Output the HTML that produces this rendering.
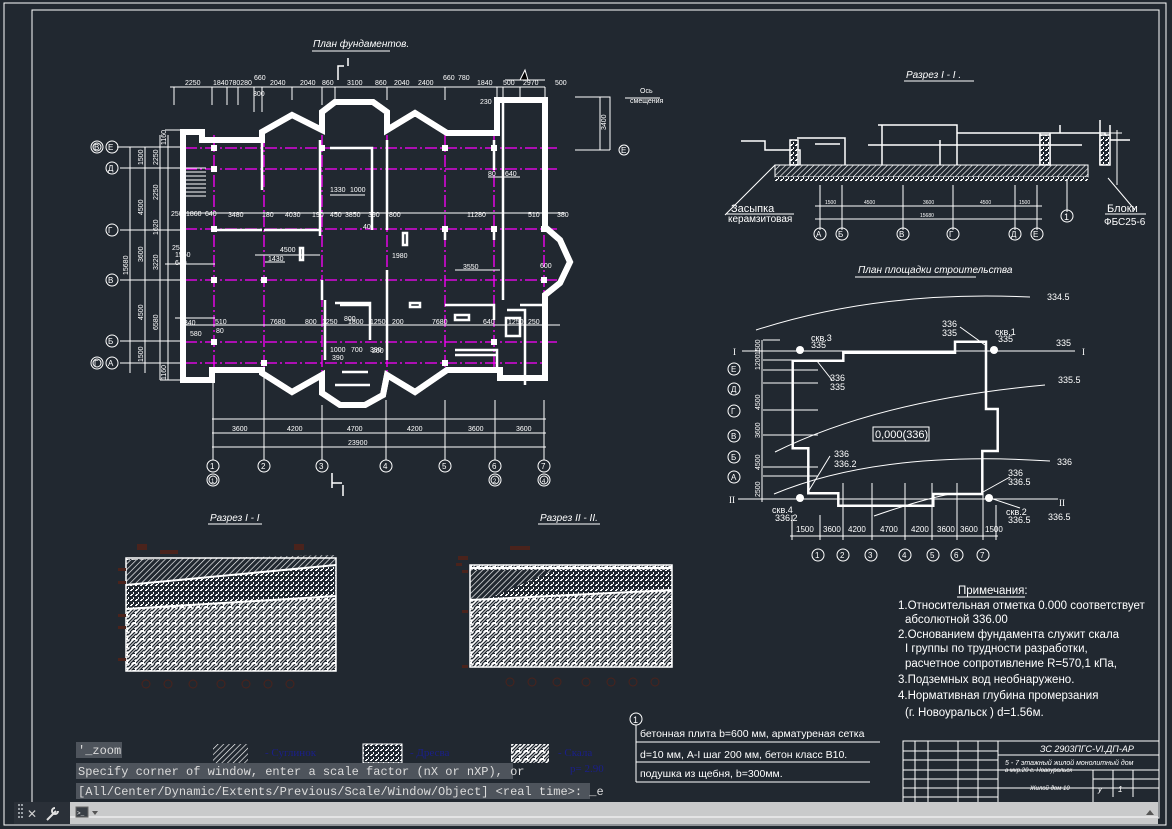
<!DOCTYPE html>
<html><head><meta charset="utf-8"><style>
html,body{margin:0;padding:0;background:#212830;overflow:hidden}
svg{display:block}
.t{font-family:"Liberation Sans",sans-serif;fill:#fff}
.m{font-family:"Liberation Mono",monospace;font-size:12px;fill:#dcdcdc}
</style></head><body>
<svg width="1172" height="829" viewBox="0 0 1172 829" xmlns="http://www.w3.org/2000/svg">
<defs>
<pattern id="hat" width="4" height="4" patternUnits="userSpaceOnUse" patternTransform="rotate(45)"><rect width="4" height="4" fill="#212830"/><line x1="0" y1="0" x2="0" y2="4" stroke="#fff" stroke-width="1.3"/></pattern>
<pattern id="dot" width="5" height="5" patternUnits="userSpaceOnUse"><rect width="5" height="5" fill="#212830"/><rect x="0" y="0" width="2" height="1" fill="#fff"/><rect x="3" y="2" width="1" height="2" fill="#fff"/><rect x="1" y="4" width="2" height="1" fill="#fff"/></pattern>
<pattern id="rock" width="8" height="8" patternUnits="userSpaceOnUse"><rect width="8" height="8" fill="#fff"/><path d="M0 7 L7 0 M2 8 L8 2 M0 3 L3 0" stroke="#212830" stroke-width="1.3"/><rect x="5" y="5" width="2" height="1" fill="#212830"/></pattern>
</defs>
<rect width="1172" height="829" fill="#212830"/>
<rect x="4" y="3" width="1162" height="822" fill="none" stroke="#fff" stroke-width="1"/>
<rect x="32" y="10" width="1127" height="808" fill="none" stroke="#fff" stroke-width="1"/>

<text x="313" y="47" class="t" font-size="10" font-style="italic">План фундаментов.</text>
<line x1="312" y1="51" x2="390" y2="51" stroke="#fff"/>
<path d="M338 80 V66 H344 M348 66 V58" stroke="#fff" fill="none" stroke-width="1.5"/>

<g stroke="#fff" stroke-width="1">
<line x1="170" y1="87" x2="545" y2="87"/>
<path d="M174 87V105 M212 87V105 M227 87V105 M238 87V105 M254 87V112 M262 87V112 M292 87V100 M322 87V105 M335 87V105 M387 87V100 M445 87V100 M497 87V105 M503 87V105 M520 87V100 M545 87V100"/>
<path d="M505 80 H545 M520 80 L525 70 L528 80"/>
</g>
<g class="t" font-size="7">
<text x="185" y="85">2250</text><text x="213" y="85">1840780280</text><text x="254" y="80">660</text><text x="270" y="85">2040</text><text x="300" y="85">2040</text><text x="322" y="85">860</text><text x="347" y="85">3100</text><text x="375" y="85">860</text><text x="394" y="85">2040</text><text x="418" y="85">2400</text><text x="443" y="80">660</text><text x="458" y="80">780</text><text x="477" y="85">1840</text><text x="503" y="85">500</text><text x="523" y="85">2970</text><text x="555" y="85">500</text><text x="253" y="96">300</text><text x="480" y="104">230</text>
<text x="640" y="93">Ось</text><text x="630" y="103">смещения</text>
</g>
<line x1="625" y1="98" x2="660" y2="98" stroke="#fff"/>
<path d="M575 97 H610 V150 M610 150 H575 M600 97 V150" stroke="#fff" fill="none"/>
<text x="0" y="0" class="t" font-size="7" transform="translate(606,130) rotate(-90)">3400</text>
<circle cx="624" cy="150" r="5" fill="none" stroke="#fff"/><text x="621" y="153" class="t" font-size="8">Е</text>

<g stroke="#ff00ff" stroke-width="1.3" stroke-dasharray="12 3 2 3" fill="none">
<path d="M185 148H560 M185 169H560 M185 229H560 M185 280H560 M185 342H560 M185 363H545"/>
<path d="M214 135V375 M264 135V375 M322 135V375 M387 135V375 M445 135V375 M494 135V375 M544 135V375"/>
</g>

<g fill="none" stroke-linejoin="miter">
<path id="ow" d="M183 132 H202 V140 H262 V132 L292 115 L322 130 V112 L335 102 H373 L387 112 V130 L415 113 L447 133 H497 V100 H545 V227 L560 240 L570 262 L560 283 L545 295 V378 H500 V370 H447 L415 392 L387 375 L383 395 L365 405 H340 L322 393 V375 L292 392 L262 373 V370 H212 V380 H183 Z" stroke="#fff" stroke-width="6"/>
<use href="#ow" stroke="#212830" stroke-width="2.5"/>
</g>
<g stroke="#fff" stroke-width="1"><path d="M186 168H206 M186 172H206 M186 176H206 M186 180H206 M186 184H206 M186 188H206 M186 192H206 M186 196H206"/></g>
<g stroke="#fff" stroke-width="2.5" fill="none">
<path d="M262 140V190 M264 230H320 M320 140V236 M330 148H372V230 M387 140V230 M387 270V360 M325 300V360 M335 303H370V340 M340 305H370 M445 305H494V320 M494 140V170 M445 230V240 M494 230V240 M503 100V300 M545 305H520 M507 310H525V385 M455 350H497V368 M455 355H497 M212 230H262 M322 280V300 M335 385H370 M342 372H368"/>
<rect x="403" y="233" width="4" height="12"/><rect x="300" y="248" width="3" height="12"/><rect x="410" y="303" width="10" height="4"/><rect x="455" y="315" width="14" height="5"/><rect x="506" y="318" width="14" height="18"/>
</g>
<g fill="#fff"><rect x="211" y="145" width="6" height="6"/><rect x="211" y="166" width="6" height="6"/><rect x="211" y="226" width="6" height="6"/><rect x="211" y="277" width="6" height="6"/><rect x="211" y="339" width="6" height="6"/><rect x="261" y="360" width="6" height="6"/><rect x="261" y="277" width="6" height="6"/><rect x="319" y="145" width="6" height="6"/><rect x="442" y="145" width="6" height="6"/><rect x="491" y="145" width="6" height="6"/><rect x="491" y="226" width="6" height="6"/><rect x="541" y="226" width="6" height="6"/><rect x="541" y="277" width="6" height="6"/><rect x="442" y="226" width="6" height="6"/><rect x="491" y="339" width="6" height="6"/><rect x="442" y="360" width="6" height="6"/></g>
<g stroke="#fff" stroke-width="1"><path d="M180 213H565 M180 325H560 M255 255H320 M265 262H285 M455 270H500 M330 195H365 M488 177H520 M165 264H215 M175 318H215"/></g>
<g class="t" font-size="7">
<text x="228" y="217">3480</text><text x="262" y="217">180</text><text x="285" y="217">4030</text><text x="312" y="217">190</text><text x="330" y="217">450</text><text x="345" y="217">3850</text><text x="368" y="217">390</text><text x="389" y="217">800</text><text x="467" y="217">11280</text><text x="528" y="217">510</text><text x="557" y="217">380</text>
<text x="280" y="252">4500</text><text x="268" y="261">1430</text><text x="463" y="269">3550</text><text x="488" y="176">80</text><text x="505" y="176">640</text><text x="330" y="192">1330</text><text x="350" y="192">1000</text><text x="363" y="229">40</text><text x="392" y="258">1980</text><text x="540" y="268">600</text>
<text x="215" y="324">510</text><text x="270" y="324">7680</text><text x="305" y="324">800</text><text x="322" y="324">1250</text><text x="348" y="324">1800</text><text x="370" y="324">1250</text><text x="392" y="324">200</text><text x="432" y="324">7680</text><text x="483" y="324">640</text><text x="508" y="324">1250</text><text x="528" y="324">250</text>
<text x="180" y="325">1340</text><text x="190" y="336">580</text><text x="216" y="333">80</text><text x="344" y="321">800</text><text x="372" y="353">200</text><text x="330" y="352">1000</text><text x="351" y="352">700</text><text x="370" y="352">390</text><text x="332" y="360">390</text>
<text x="171" y="216">250</text><text x="186" y="216">1860</text><text x="205" y="216">640</text><text x="175" y="257">1550</text><text x="175" y="265">640</text><text x="172" y="250">250</text>
</g>
<g stroke="#fff" stroke-width="1"><path d="M117 147H185 M120 168H185 M120 230H185 M120 280H185 M120 341H185 M120 363H185 M130 147V373 M145 147V373 M160 135V380 M168 135V380 M165 130H185 M160 380H185"/></g>
<g class="t" font-size="7">
<text transform="translate(128,275) rotate(-90)">15680</text><text transform="translate(143,165) rotate(-90)">1500</text><text transform="translate(143,215) rotate(-90)">4500</text><text transform="translate(143,262) rotate(-90)">3600</text><text transform="translate(143,320) rotate(-90)">4500</text><text transform="translate(143,362) rotate(-90)">1500</text><text transform="translate(158,165) rotate(-90)">2250</text><text transform="translate(158,200) rotate(-90)">2250</text><text transform="translate(158,235) rotate(-90)">1620</text><text transform="translate(158,270) rotate(-90)">3220</text><text transform="translate(158,330) rotate(-90)">6580</text><text transform="translate(166,145) rotate(-90)">1160</text><text transform="translate(166,380) rotate(-90)">1160</text>
</g>
<g fill="none" stroke="#fff" stroke-width="1">
<circle cx="112" cy="147" r="6"/><circle cx="97" cy="147" r="6"/><circle cx="97" cy="147" r="4"/>
<circle cx="112" cy="168" r="6"/><circle cx="112" cy="230" r="6"/><circle cx="112" cy="280" r="6"/><circle cx="112" cy="341" r="6"/><circle cx="112" cy="363" r="6"/><circle cx="97" cy="363" r="6"/><circle cx="97" cy="363" r="4"/>
</g>
<g class="t" font-size="8"><text x="108" y="150">Е</text><text x="94" y="150">В</text><text x="108" y="171">Д</text><text x="108" y="233">Г</text><text x="108" y="283">В</text><text x="108" y="344">Б</text><text x="108" y="366">А</text><text x="94" y="366">Г</text></g>
<g stroke="#fff" stroke-width="1"><path d="M212 419H546 M212 433H546 M212 447H546 M213 375V460 M264 375V460 M322 405V460 M386 400V460 M445 400V460 M495 400V460 M544 400V460"/></g>
<g class="t" font-size="7"><text x="232" y="431">3600</text><text x="287" y="431">4200</text><text x="347" y="431">4700</text><text x="407" y="431">4200</text><text x="468" y="431">3600</text><text x="516" y="431">3600</text><text x="348" y="445">23900</text></g>
<g fill="none" stroke="#fff" stroke-width="1">
<circle cx="213" cy="466" r="6"/><circle cx="264" cy="466" r="6"/><circle cx="322" cy="466" r="6"/><circle cx="386" cy="466" r="6"/><circle cx="445" cy="466" r="6"/><circle cx="495" cy="466" r="6"/><circle cx="544" cy="466" r="6"/>
<circle cx="213" cy="480" r="6"/><circle cx="213" cy="480" r="4"/><circle cx="495" cy="480" r="6"/><circle cx="495" cy="480" r="4"/><circle cx="544" cy="480" r="6"/><circle cx="544" cy="480" r="4"/>
</g>
<g class="t" font-size="8"><text x="210" y="469">1</text><text x="261" y="469">2</text><text x="319" y="469">3</text><text x="383" y="469">4</text><text x="442" y="469">5</text><text x="492" y="469">6</text><text x="541" y="469">7</text><text x="211" y="483" font-size="6">1</text><text x="493" y="483" font-size="6">2</text><text x="542" y="483" font-size="6">4</text></g>
<path d="M332 473V488 M332 483H342 M343 485V496" stroke="#fff" stroke-width="1.5" fill="none"/>

<text x="906" y="78" class="t" font-size="10" font-style="italic">Разрез I - I .</text>
<line x1="904" y1="81" x2="974" y2="81" stroke="#fff"/>
<rect x="775" y="165" width="313" height="12" fill="url(#hat)" stroke="#fff"/>
<rect x="775" y="177" width="313" height="4" fill="url(#dot)"/>
<g stroke="#fff" stroke-width="1.5" fill="none">
<path d="M741 141H765 V150 H800 V165 M797 138H845V165 M845 138V165 M878 125H957V165 M882 125V165 M957 133H1105V165 M1040 133V165 M1050 133V165 M1100 120V165 M940 140V165 M1060 125V133 M1110 125V140H1130"/>
<rect x="790" y="140" width="8" height="25" fill="url(#dot)"/><rect x="1040" y="135" width="10" height="30" fill="url(#dot)"/><rect x="1100" y="135" width="10" height="30" fill="url(#dot)"/>
<path d="M868 145H1082 M815 144H840"/>
</g>
<g stroke="#fff" stroke-width="1"><path d="M820 185V230 M842 185V230 M903 185V230 M953 185V230 M1015 185V230 M1037 185V230 M815 206H1042 M815 219H1042 M1067 180V212 M1108 178L1135 210 M725 215L775 165 M1117 130V185 M1105 133H1122"/></g>
<circle cx="1067" cy="216" r="6" fill="none" stroke="#fff"/><text x="1064" y="220" class="t" font-size="9">1</text>
<g fill="none" stroke="#fff"><circle cx="820" cy="234" r="6"/><circle cx="842" cy="234" r="6"/><circle cx="903" cy="234" r="6"/><circle cx="953" cy="234" r="6"/><circle cx="1015" cy="234" r="6"/><circle cx="1037" cy="234" r="6"/></g>
<g class="t" font-size="8"><text x="816" y="237">А</text><text x="838" y="237">Б</text><text x="899" y="237">В</text><text x="949" y="237">Г</text><text x="1011" y="237">Д</text><text x="1033" y="237">Е</text></g>
<g class="t" font-size="5"><text x="825" y="204">1500</text><text x="864" y="204">4500</text><text x="923" y="204">3600</text><text x="980" y="204">4500</text><text x="1019" y="204">1500</text><text x="920" y="217">15680</text></g>
<text x="731" y="212" class="t" font-size="11">Засыпка</text><line x1="726" y1="214" x2="794" y2="214" stroke="#fff"/>
<text x="728" y="222" class="t" font-size="10">керамзитовая</text>
<text x="1107" y="212" class="t" font-size="11">Блоки</text><line x1="1105" y1="214" x2="1146" y2="214" stroke="#fff"/>
<text x="1104" y="225" class="t" font-size="10">ФБС25-6</text>

<text x="858" y="273" class="t" font-size="10" font-style="italic">План площадки строительства</text>
<line x1="855" y1="277" x2="976" y2="277" stroke="#fff"/>
<g stroke="#fff" stroke-width="1" fill="none">
<path d="M756 330 Q880 290 1030 297"/>
<path d="M775 452 Q880 400 1045 385"/>
<path d="M774 494 Q880 450 1050 461"/>
<path d="M874 516 Q920 500 950 494"/>
<path d="M742 351H1075 M738 499H1058 M762 340V502 M763 340H780 M763 360H818 M763 370H818 M763 383H818 M763 410H818 M763 435H818 M763 467H818 M763 476H818"/>
<path d="M792 515V540 M820 515V540 M843 483V540 M872 483V540 M905 483V540 M932 483V540 M957 483V540 M983 483V540 M996 505V540 M790 536H998"/>
<path d="M817 361L832 380 M808 492L830 456 M983 492L1010 477 M990 498L1020 508 M960 327L985 345"/>
</g>
<polygon points="792.7,360.7 843.3,360.7 843.3,352.7 955,352.7 955,341.7 986,341.7 986,409 997.7,409 997.7,451 982.3,451 982.3,494 933.3,494 933.3,505.7 838.3,505.7 838.3,493.3 808.3,493.3 808.3,448.3 792.7,448.3" fill="none" stroke="#fff" stroke-width="2.5"/>
<g fill="#fff"><circle cx="800" cy="350" r="4"/><circle cx="994" cy="350" r="4"/><circle cx="800" cy="498" r="4"/><circle cx="989" cy="498" r="4"/></g>
<rect x="873" y="427" width="56" height="14" fill="none" stroke="#fff"/><text x="875" y="438" class="t" font-size="11">0,000(336)</text>
<g class="t" font-size="9">
<text x="1056" y="346">335</text><text x="1058" y="383">335.5</text><text x="1057" y="465">336</text><text x="733" y="355" font-family="Liberation Serif">I</text><text x="1082" y="355" font-family="Liberation Serif">I</text><text x="729" y="503" font-family="Liberation Serif">II</text><text x="1059" y="506" font-family="Liberation Serif">II</text>
<text x="811" y="341">скв.3</text><text x="811" y="348">335</text><text x="942" y="327">336</text><text x="942" y="336">335</text><text x="995" y="335">скв.1</text><text x="998" y="342">335</text>
<text x="830" y="381">336</text><text x="830" y="390">335</text><text x="834" y="457">336</text><text x="834" y="467">336.2</text>
<text x="1008" y="476">336</text><text x="1008" y="485">336.5</text><text x="772" y="513">скв.4</text><text x="775" y="521">336.2</text><text x="1006" y="515">скв.2</text><text x="1008" y="523">336.5</text><text x="1048" y="520">336.5</text><text x="1047" y="300">334.5</text>
</g>
<g class="t" font-size="8"><text x="796" y="532">1500</text><text x="823" y="532">3600</text><text x="848" y="532">4200</text><text x="880" y="532">4700</text><text x="911" y="532">4200</text><text x="937" y="532">3600</text><text x="960" y="532">3600</text><text x="985" y="532">1500</text></g>
<g fill="none" stroke="#fff"><circle cx="818" cy="555" r="6"/><circle cx="843" cy="555" r="6"/><circle cx="871" cy="555" r="6"/><circle cx="905" cy="555" r="6"/><circle cx="933" cy="555" r="6"/><circle cx="957" cy="555" r="6"/><circle cx="983" cy="555" r="6"/>
<circle cx="734" cy="369" r="6"/><circle cx="734" cy="389" r="6"/><circle cx="734" cy="411" r="6"/><circle cx="734" cy="436" r="6"/><circle cx="734" cy="457" r="6"/><circle cx="734" cy="477" r="6"/></g>
<g class="t" font-size="8"><text x="815" y="558">1</text><text x="840" y="558">2</text><text x="868" y="558">3</text><text x="902" y="558">4</text><text x="930" y="558">5</text><text x="954" y="558">6</text><text x="980" y="558">7</text>
<text x="731" y="372">Е</text><text x="731" y="392">Д</text><text x="731" y="414">Г</text><text x="731" y="439">В</text><text x="731" y="460">Б</text><text x="731" y="480">А</text></g>
<g class="t" font-size="7"><text transform="translate(760,355) rotate(-90)">1500</text><text transform="translate(760,370) rotate(-90)">1200</text><text transform="translate(760,410) rotate(-90)">4500</text><text transform="translate(760,438) rotate(-90)">3600</text><text transform="translate(760,470) rotate(-90)">4500</text><text transform="translate(760,497) rotate(-90)">2500</text></g>

<g class="t" font-size="11.5">
<text x="958" y="594">Примечания:</text>
<text x="898" y="609">1.Относительная отметка 0.000 соответствует</text>
<text x="905" y="623">абсолютной 336.00</text>
<text x="898" y="638">2.Основанием фундамента служит скала</text>
<text x="905" y="652">I группы по трудности разработки,</text>
<text x="905" y="667">расчетное сопротивление R=570,1 кПа,</text>
<text x="898" y="683">3.Подземных вод необнаружено.</text>
<text x="898" y="699">4.Нормативная глубина промерзания</text>
<text x="905" y="716">(г. Новоуральск ) d=1.56м.</text>
</g>
<line x1="957" y1="597" x2="1025" y2="597" stroke="#fff"/>

<circle cx="636" cy="719" r="6" fill="none" stroke="#fff"/><text x="633" y="723" class="t" font-size="9">1</text>
<path d="M636 725V782 M636 742H880 M636 762H870 M636 782H870" stroke="#fff" fill="none"/>
<g class="t" font-size="10.5"><text x="640" y="737">бетонная плита b=600 мм, арматуреная сетка</text><text x="640" y="758">d=10 мм, A-I шаг 200 мм, бетон класс B10.</text><text x="640" y="777">подушка из щебня, b=300мм.</text></g>

<text x="210" y="521" class="t" font-size="10" font-style="italic">Разрез I - I</text><line x1="208" y1="524" x2="262" y2="524" stroke="#fff"/>
<text x="540" y="521" class="t" font-size="10" font-style="italic">Разрез II - II.</text><line x1="538" y1="524" x2="600" y2="524" stroke="#fff"/>
<rect x="126" y="559" width="210" height="112" fill="url(#rock)"/>
<polygon points="126,560 336,555 336,596 126,609" fill="url(#dot)"/>
<polygon points="126,560 336,555 336,565 260,572 126,585" fill="url(#hat)"/>
<path d="M126 609 L336 596 M126 585 L336 565" stroke="#fff" stroke-width="2" fill="none"/>
<rect x="126" y="558" width="210" height="113" fill="none" stroke="#fff" stroke-width="1.5"/>
<rect x="470" y="565" width="202" height="102" fill="url(#rock)"/>
<polygon points="470,570 672,570 672,590 570,595 470,600" fill="url(#dot)"/>
<polygon points="470,570 555,570 490,598 470,600" fill="url(#hat)"/>
<path d="M470 600 L672 590 M470 568H672" stroke="#fff" stroke-width="2" fill="none"/>
<rect x="470" y="565" width="202" height="102" fill="none" stroke="#fff" stroke-width="1.5"/>
<g fill="#4a231c"><rect x="137" y="544" width="10" height="6"/><rect x="160" y="550" width="18" height="4"/><rect x="294" y="544" width="10" height="6"/><rect x="458" y="556" width="10" height="4"/><rect x="456" y="563" width="6" height="3"/><rect x="510" y="546" width="20" height="4"/><rect x="118" y="568" width="8" height="3"/><rect x="118" y="581" width="8" height="3"/><rect x="118" y="614" width="8" height="3"/><rect x="118" y="626" width="8" height="3"/><rect x="118" y="658" width="8" height="3"/><rect x="462" y="570" width="6" height="3"/><rect x="462" y="610" width="6" height="3"/><rect x="462" y="665" width="6" height="3"/></g>
<g fill="none" stroke="#4a231c"><circle cx="146" cy="684" r="4"/><circle cx="168" cy="684" r="4"/><circle cx="193" cy="684" r="4"/><circle cx="221" cy="684" r="4"/><circle cx="246" cy="684" r="4"/><circle cx="268" cy="684" r="4"/><circle cx="290" cy="684" r="4"/><circle cx="510" cy="682" r="4"/><circle cx="532" cy="682" r="4"/><circle cx="557" cy="682" r="4"/><circle cx="586" cy="682" r="4"/><circle cx="611" cy="682" r="4"/><circle cx="633" cy="682" r="4"/><circle cx="655" cy="682" r="4"/></g>

<g stroke="#fff" fill="none" stroke-width="1">
<rect x="903" y="741" width="256" height="77"/>
<path d="M903 751H998 M903 760H998 M903 770H1159 M903 779H998 M903 788H1159 M903 797H998 M903 806H998 M903 813H998 M915 741V818 M928 741V818 M958 741V818 M978 741V818 M998 741V818 M998 755H1159 M1093 770V818 M1113 770V797 M1133 770V797 M1093 779H1159"/>
</g>
<g class="t" font-style="italic"><text x="1040" y="752" font-size="9">ЗС 2903ПГС-VI.ДП-АР</text><text x="1005" y="765" font-size="7">5 - 7 этажный жилой монолитный дом</text><text x="1005" y="772" font-size="6">в мкр.20 г. Новоуральск</text><text x="1030" y="790" font-size="6">Жилой дом 10</text><text x="1098" y="792" font-size="8">у</text><text x="1118" y="792" font-size="8">1</text></g>

<rect x="213" y="744" width="35" height="19" fill="url(#hat)"/>
<text x="265" y="756" font-family="Liberation Serif" font-size="11" fill="#1a1f8a">- Суглинок</text>
<rect x="363" y="744" width="39" height="19" fill="url(#dot)" stroke="#fff"/>
<text x="410" y="756" font-family="Liberation Serif" font-size="11" fill="#1a1f8a">- Дресва</text>
<rect x="511" y="744" width="38" height="19" fill="url(#rock)"/>
<text x="558" y="756" font-family="Liberation Serif" font-size="11" fill="#1a1f8a">- Скала</text>
<text x="570" y="772" font-family="Liberation Serif" font-size="11" fill="#1a1f8a">p= 2.90</text>

<rect x="76" y="742" width="46" height="16" fill="#4e545c"/>
<text x="78" y="754" class="m">'_zoom</text>
<rect x="76" y="763" width="437" height="16" fill="#4e545c"/>
<text x="78" y="775" class="m">Specify corner of window, enter a scale factor (nX or nXP), or</text>
<rect x="76" y="783" width="514" height="16" fill="#4e545c"/>
<text x="78" y="795" class="m">[All/Center/Dynamic/Extents/Previous/Scale/Window/Object] &lt;real time&gt;: _e</text>
<rect x="70" y="802" width="1088" height="22" fill="#c9cacb"/>
<line x1="70" y1="817" x2="1158" y2="817" stroke="#fff"/>
<rect x="14" y="802" width="56" height="22" fill="#2a3038"/>
<g fill="#9aa0a6"><rect x="18" y="804" width="2" height="2"/><rect x="18" y="808" width="2" height="2"/><rect x="18" y="812" width="2" height="2"/><rect x="18" y="816" width="2" height="2"/><rect x="21" y="804" width="2" height="2"/><rect x="21" y="808" width="2" height="2"/><rect x="21" y="812" width="2" height="2"/><rect x="21" y="816" width="2" height="2"/></g>
<text x="27" y="818" font-family="Liberation Sans" font-size="12" fill="#d0d0d0">✕</text>
<path d="M47 820 L56 811 M55 808 a3 3 0 1 0 3 3" stroke="#e0e0e0" stroke-width="2" fill="none"/>
<rect x="76" y="807" width="12" height="10" fill="#3a3f46" stroke="#666"/>
<text x="77" y="815" font-family="Liberation Mono" font-size="6" fill="#fff">&gt;_</text>
<path d="M92 811 L98 811 L95 815 Z" fill="#555"/>
<path d="M1146 815 L1150 810 L1154 815 Z" fill="#555"/>
</svg>
</body></html>
